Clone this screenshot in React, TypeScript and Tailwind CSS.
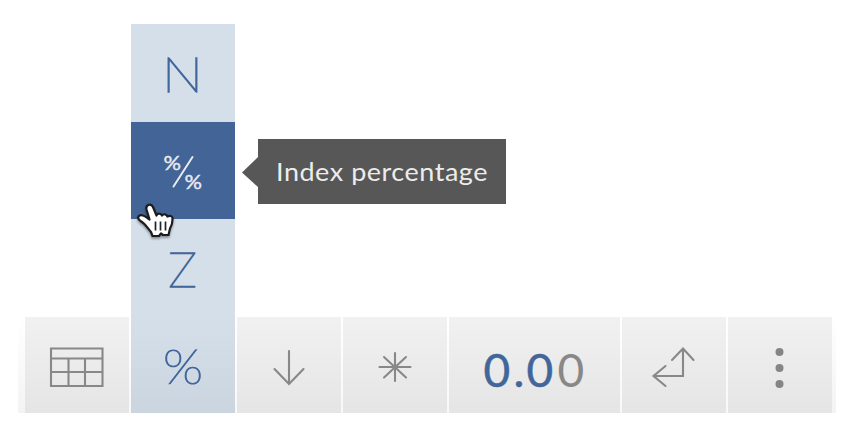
import type { ReactNode } from 'react';

function Cell({ children, width = 'w-[104px]' }: { children: ReactNode; width?: string }) {
  return (
    <div className={`${width} flex h-24 shrink-0 items-center justify-center bg-linear-to-b from-[#f1f1f1] to-[#e5e5e5]`}>
      {children}
    </div>
  );
}

function Icon({ children }: { children: ReactNode }) {
  return (
    <svg width="104" height="96" viewBox="0 0 104 96" fill="none" stroke="#888" strokeWidth="2.1" strokeLinecap="round">
      {children}
    </svg>
  );
}

function Tooltip() {
  return (
    <div className="absolute top-[115px] left-[111px] flex items-center">
      <svg width="16" height="32" viewBox="0 0 16 32">
        <path d="M16 1 0 16.500 16 31Z" fill="#575757" />
      </svg>
      <div className="flex h-[65px] w-[248px] items-center bg-[#575757] pl-[18px] font-['Lato',sans-serif] text-[25px] font-normal whitespace-nowrap text-[#ececec]">
        <svg width="214" height="40" viewBox="0 0 214 40">
          <text x="0" y="29" textLength="212" lengthAdjust="spacingAndGlyphs" letterSpacing="0.500" fill="currentColor">Index percentage</text>
        </svg>
      </div>
    </div>
  );
}

function HandCursor() {
  return (
    <svg className="absolute top-[177px] left-[4px] drop-shadow-[0_2px_1px_rgba(0,0,0,0.35)]" width="40" height="38" viewBox="0 0 40 38">
      <path
        d="M14.500 18.500 11.500 8.500C10.500 3.500 16 2 18 6L21.500 14.500C22 12 26 12 27 14.500C28.500 12.500 31.500 13 32.500 15.500C35 14 38 15 37.500 18.500C37.500 22 36.500 25 35 27.500L33.500 34H28L26 32.500 24 35H17.500L16 31C13 27.500 10 22.500 5.500 20C1 16.500 4 13 8 14.500C11 15.500 12.500 17.500 14.500 18.500Z"
        fill="#fff"
        stroke="#1c1c1c"
        strokeWidth="2.200"
        strokeLinejoin="round"
      />
      <path d="M20.500 20.500V29.500M25.500 20.500V29.500M30.500 20.500V29.500" stroke="#222" strokeWidth="1.700" />
    </svg>
  );
}

function FormatMenu() {
  return (
    <div className="relative flex h-[389px] w-[104px] shrink-0 flex-col font-['Lato',sans-serif] font-thin text-[#41669a]">
      <div className="h-[98px] bg-[#d5dfea]">
        <svg width="104" height="98" viewBox="0 0 104 98">
          <text x="31" y="67.500" fontSize="48" textLength="41" lengthAdjust="spacingAndGlyphs" fill="#41669a" stroke="#41669a" strokeWidth="1.400">N</text>
        </svg>
      </div>
      <div className="h-[97px] bg-[#426496]">
        <svg width="104" height="97" viewBox="0 0 104 97" fill="#e6ecf4">
          <text x="32.500" y="48" fontSize="19" fontWeight="400" textLength="17.500" lengthAdjust="spacingAndGlyphs" stroke="#e6ecf4" strokeWidth="0.400">%</text>
          <text x="53.500" y="66.500" fontSize="19" fontWeight="400" textLength="17.500" lengthAdjust="spacingAndGlyphs" stroke="#e6ecf4" strokeWidth="0.400">%</text>
          <path d="M42.500 64.500 61.500 35" stroke="#e6ecf4" strokeWidth="2" strokeLinecap="round" />
        </svg>
      </div>
      <div className="h-[98px] bg-[#d5dfea]">
        <svg width="104" height="98" viewBox="0 0 104 98">
          <text x="51.500" y="68" textAnchor="middle" fontSize="48" fill="#41669a" stroke="#41669a" strokeWidth="1.300">Z</text>
        </svg>
      </div>
      <div className="h-24 bg-linear-to-b from-[#d5dfea] to-[#cad5df]">
        <svg width="104" height="96" viewBox="0 0 104 96">
          <text x="32" y="67" fontSize="47" textLength="40" lengthAdjust="spacingAndGlyphs" fill="#41669a" stroke="#41669a" strokeWidth="1.200">%</text>
        </svg>
      </div>
      <Tooltip />
      <HandCursor />
    </div>
  );
}

export default function App() {
  return (
    <div className="h-[424px] w-[846px] overflow-hidden bg-white pt-6 pl-[18px]">
      <div className="flex h-[389px] items-end">
        <div className="h-24 w-[7px] bg-linear-to-b from-white to-[#f3f3f3]" />
        <div className="flex items-end gap-0.5 bg-[linear-gradient(to_top,#f8f8f8,#fff_96px)]">
          <Cell>
            <Icon>
              <path d="M26 31.500H77.500V69H26ZM26 41.500H77.500M26 55H77.500M43.500 41.500V69M60 41.500V69" strokeLinecap="butt" />
            </Icon>
          </Cell>
          <FormatMenu />
          <Cell>
            <Icon>
              <path d="M52 34V66M37.500 52 52 67 66.500 52" />
            </Icon>
          </Cell>
          <Cell>
            <Icon>
              <path d="M52 36V64M36.500 50H67.500M41 40 63 60.500M63 40 41 60.500" />
            </Icon>
          </Cell>
          <Cell width="w-[171px]">
            <svg width="171" height="96" viewBox="0 0 171 96" className="font-['Lato',sans-serif]" fontSize="46">
              <text y="69.500" fill="#41669a" stroke="#41669a" strokeWidth="0.500">
                <tspan x="34.500">0</tspan>
                <tspan x="64.500">.</tspan>
                <tspan x="77.500">0</tspan>
              </text>
              <text x="108.500" y="69.500" fill="#888">0</text>
            </svg>
          </Cell>
          <Cell>
            <Icon>
              <path d="M61 32V59H32M50 43 61 31.500 71.500 43M43.500 49 31.500 59 43.500 69" />
            </Icon>
          </Cell>
          <Cell>
            <Icon>
              <g fill="#858585" stroke="none">
                <circle cx="51.500" cy="35" r="4" />
                <circle cx="51.500" cy="51" r="4" />
                <circle cx="51.500" cy="67" r="4" />
              </g>
            </Icon>
          </Cell>
        </div>
        <div className="h-24 w-[4px] bg-linear-to-b from-white to-[#f3f3f3]" />
      </div>
    </div>
  );
}
